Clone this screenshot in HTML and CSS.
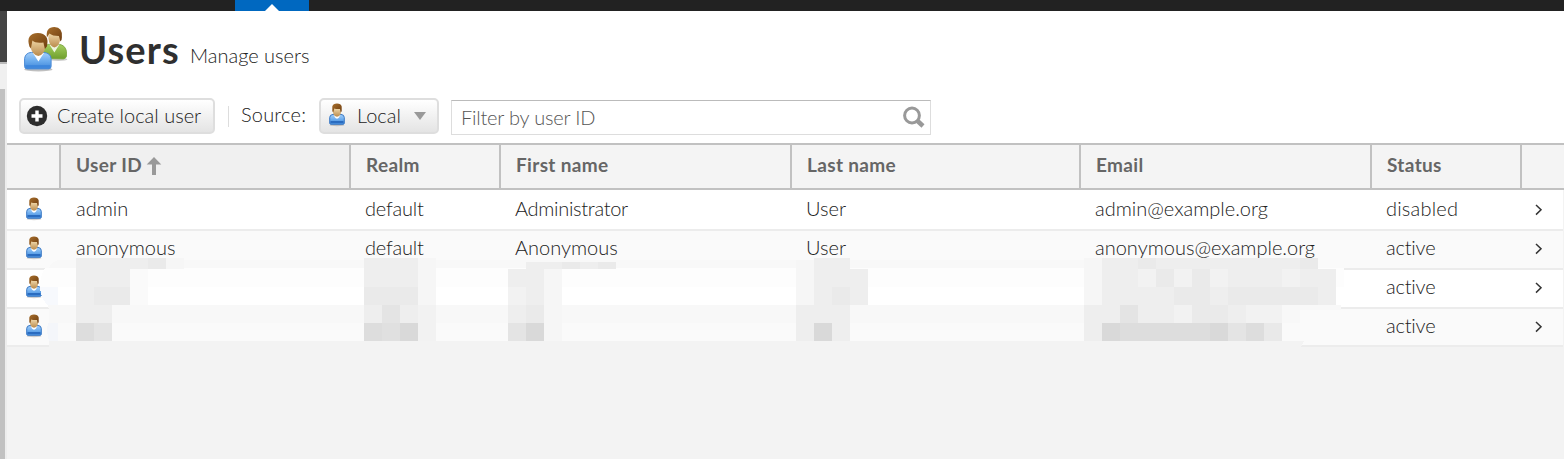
FILE: index.html
```html
<!DOCTYPE html>
<html lang="en">
<head>
<meta charset="utf-8">
<title>Users</title>
<link rel="stylesheet" href="styles.css">
</head>
<body>
<svg class="defs" width="0" height="0" aria-hidden="true">
  <defs>
    <linearGradient id="hair" x1="0" y1="0" x2="1" y2="1"><stop offset="0" stop-color="#a86f2c"/><stop offset="1" stop-color="#6e3d10"/></linearGradient>
    <linearGradient id="skin" x1="0" y1="0" x2="0" y2="1"><stop offset="0" stop-color="#f3dcae"/><stop offset="1" stop-color="#b98a4c"/></linearGradient>
    <linearGradient id="blue" x1="0" y1="0" x2="0" y2="1"><stop offset="0" stop-color="#a5d0fa"/><stop offset="0.55" stop-color="#68a9ec"/><stop offset="1" stop-color="#3f86d8"/></linearGradient>
    <linearGradient id="green" x1="0" y1="0" x2="0" y2="1"><stop offset="0" stop-color="#a5cf60"/><stop offset="1" stop-color="#6f9f2c"/></linearGradient>
    <symbol id="person" viewBox="0 0 18 24">
      <ellipse cx="9" cy="22" rx="7.5" ry="1.2" fill="#000" opacity=".18"/>
      <path d="M1.700 20V14.500Q1.700 11.700 5 11.400L13 11.400Q16.300 11.700 16.300 14.500V20Q16.300 21.300 15 21.300H3Q1.700 21.300 1.700 20Z" fill="url(#blue)" stroke="#3a78c4"/>
      <path d="M6 11.500H12Q11.500 15.500 9 15.700Q6.500 15.500 6 11.500Z" fill="#fff"/>
      <path d="M2.500 19H15.500" stroke="#2a6cc0" stroke-width="2"/>
      <path d="M5 5H13V9.500Q12.300 13.500 9 13.700Q5.700 13.500 5 9.500Z" fill="url(#skin)"/>
      <path d="M4.300 8.500V3.500Q5 .5 9 .5Q13 .5 13.700 3.500V8.500L12.600 9L12 6Q8 6.200 6.300 5.500L5.400 9Z" fill="url(#hair)"/>
    </symbol>
    <symbol id="chev" viewBox="0 0 8 12"><path d="M1 1L6 5.800L1 10.600" fill="none" stroke="#333" stroke-width="1.500"/></symbol>
  </defs>
</svg>
<div class="topbar"><div class="active-tab"></div></div>
<div class="shell">
  <div class="rail"><div class="rail-dark"></div><div class="rail-light"></div><div class="rail-track"></div></div>
  <main class="panel">
    <header class="title">
      <svg class="users-icon" width="48" height="50" viewBox="0.6 0.6 48 50">
        <ellipse cx="16" cy="45" rx="14" ry="2" fill="#000" opacity=".25"/>
        <ellipse cx="36" cy="35" rx="9" ry="1.500" fill="#000" opacity=".2"/>
        <path d="M20 34V26Q21 21 26 20L37 20Q43 21 44 27V32Q43.500 34 41 34.500Z" fill="url(#green)" stroke="#7fa843"/>
        <path d="M27 20H37L32 28Z" fill="#eef4e0"/>
        <path d="M26 8H38V14Q37 22 32 23Q27 22 26 14Z" fill="url(#skin)"/>
        <path d="M24.500 13Q23 2.500 32 2.500Q40.500 2.500 39.500 13Q39.500 16 38 17L36.500 11.500Q30 11.500 27 9Z" fill="url(#hair)"/>
        <path d="M2.200 42V34Q3 28.500 9 28L21 28Q28 28.500 28.700 34V42Q28.700 44.500 26 44.500H5Q2.200 44.500 2.200 42Z" fill="url(#blue)" stroke="#4a8ad6"/>
        <path d="M3.200 42H27.800" stroke="#3d86dc" stroke-width="2.500"/>
        <path d="M10.500 28.500H21.500L16 37Z" fill="#fff"/>
        <path d="M8 14H23V22Q22 30.500 16 31.500Q9.500 30.500 8 22Z" fill="url(#skin)"/>
        <path d="M7 22Q3 9 15.500 8.500Q27.500 9 24.500 22L22.500 24.500L21 18Q13 19 10 16L8.500 24Z" fill="url(#hair)"/>
      </svg>
      <h1>Users</h1><span class="subtitle">Manage users</span>
    </header>
    <div class="toolbar">
      <button class="btn create"><svg width="22" height="22" viewBox="0 0 22 22"><circle cx="11" cy="11" r="10.200" fill="#2d2d2d"/><path d="M11 5.500V16.500M5.500 11H16.500" stroke="#fff" stroke-width="3.400"/></svg><span>Create local user</span></button>
      <span class="divider"></span>
      <span class="source">Source:</span>
      <button class="btn local"><svg width="18" height="24"><use href="#person"/></svg><span>Local</span><i class="caret"></i></button>
      <div class="filter"><span>Filter by user ID</span><svg width="24" height="24" viewBox="0 0 24 24" fill="none" stroke="#999"><circle cx="10" cy="9.500" r="7.400" stroke-width="3"/><path d="M15 14.500L21 20" stroke-width="4.500"/></svg></div>
    </div>
    <div class="grid head">
      <div></div><div class="sorted">User ID<svg width="16" height="18" viewBox="0 0 16 18"><path d="M8 0L15.300 7.500H10V18H6V7.500H.7Z" fill="#999"/></svg></div><div>Realm</div><div>First name</div><div>Last name</div><div>Email</div><div>Status</div><div></div>
    </div>
    <div class="grid row first"><div><svg width="18" height="24"><use href="#person"/></svg></div><div>admin</div><div class="tight">default</div><div class="tighter">Administrator</div><div>User</div><div>admin@example.org</div><div class="loose">disabled</div><div><svg width="8" height="12"><use href="#chev"/></svg></div></div>
    <div class="grid row alt"><div><svg width="18" height="24"><use href="#person"/></svg></div><div>anonymous</div><div class="tight">default</div><div>Anonymous</div><div>User</div><div>anonymous@example.org</div><div class="tight">active</div><div><svg width="8" height="12"><use href="#chev"/></svg></div></div>
    <div class="grid row"><div><svg width="18" height="24"><use href="#person"/></svg></div><div></div><div></div><div></div><div></div><div></div><div class="tight">active</div><div><svg width="8" height="12"><use href="#chev"/></svg></div></div>
    <div class="grid row alt last"><div><svg width="18" height="24"><use href="#person"/></svg></div><div></div><div></div><div></div><div></div><div></div><div class="tight">active</div><div><svg width="8" height="12"><use href="#chev"/></svg></div></div>
  </main>
</div>
<svg class="redaction" width="1564" height="459" shape-rendering="crispEdges" aria-hidden="true">
  <path d="M58 260H1318V269H48Q53 261 58 260Z" fill="#f8f8f8"/>
  <path d="M45 268H1344V287H40Q40 275 45 268Z" fill="#fdfdfd"/>
  <path d="M40 287H1343V305H48Q41 300 40 287Z" fill="#fff"/>
  <path d="M40 287H58V305H48Q41 300 40 287Z" fill="#f7f9fd"/>
  <path d="M48 305H1341V310H49Z" fill="#f8f8f8"/>
  <path d="M49 310H1300V323H49Z" fill="#f8f8f8"/>
  <path d="M48 323H1300V341H49Q46 332 48 323Z" fill="#fafafa"/>
  <path d="M48 323H58V341H49Q46 332 48 323Z" fill="#f4f6fa"/>
  <path d="M49 341H1304L1301 347H49Z" fill="#f3f3f3"/>
  <g fill="#eee">
    <path d="M76 258H184V269H76ZM76 269H130V287H76ZM76 287H94V305H76ZM76 305H112V323H76Z"/>
    <path d="M364 258H418V287H364ZM364 305H382V323H364ZM400 305H418V323H400Z"/>
    <path d="M508 269H544V323H508ZM526 262H616V269H526Z"/>
    <path d="M814 258H850V341H814ZM796 305H814V341H796ZM832 269H868V305H832Z"/>
    <path d="M1102 258H1318V269H1336V305H1102ZM1084 305H1282V341H1084Z"/>
  </g>
  <g fill="#f6f6f6">
    <path d="M166 258H184V269H166ZM418 258H436V305H418ZM544 269H562V341H544ZM796 260H814V305H796ZM1084 258H1102V305H1084Z"/>
  </g>
  <path d="M130 269H148V305H130Z" fill="#fafafa"/>
  <path d="M418 305H436V341H418ZM508 287H526V305H508ZM1138 269H1156V287H1138ZM1174 269H1192V287H1174ZM1210 269H1228V287H1210ZM1282 269H1300V287H1282ZM1174 305H1192V323H1174ZM1246 305H1282V323H1246Z" fill="#f2f2f2"/>
  <path d="M94 287H130V305H94ZM148 258H166V269H148ZM364 287H418V305H364ZM526 305H544V323H526ZM562 262H580V269H562ZM598 262H616V269H598ZM832 287H850V305H832ZM1138 258H1156V269H1138ZM1156 269H1174V287H1156ZM1192 269H1210V287H1192ZM1174 287H1210V305H1174ZM1228 287H1318V305H1228ZM1300 258H1318V269H1300ZM1192 305H1228V323H1192Z" fill="#eaeaea"/>
  <path d="M382 305H400V323H382ZM508 323H526V341H508ZM94 323H112V341H94ZM1120 305H1138V323H1120ZM1228 323H1246V341H1228Z" fill="#e4e4e4"/>
  <path d="M1264 323H1282V341H1264Z" fill="#e9e9e9"/>
  <path d="M382 323H400V341H382Z" fill="#e0e0e0"/>
  <path d="M76 323H94V341H76ZM364 323H382V341H364ZM1102 323H1228V341H1102ZM1246 323H1264V341H1246Z" fill="#dddddd"/>
  <path d="M400 323H418V341H400ZM526 323H544V341H526ZM814 323H832V341H814ZM1102 323H1120V341H1102ZM1210 323H1228V341H1210Z" fill="#d9d9d9"/>
</svg>
</body>
</html>
```
FILE: styles.css
```css
* { box-sizing: border-box; }
body { margin: 0; height: 459px; overflow: hidden; background: #f3f3f3; color: #222; font: 300 20px/24px Lato, "Open Sans", sans-serif; font-variant-ligatures: none; }
.defs { position: absolute; }
.topbar { height: 11px; background: #222; padding-left: 235px; }
.active-tab { width: 74px; height: 11px; background: #0068c0; display: flex; justify-content: center; align-items: flex-end; }
.active-tab::after { content: ""; border: 7px solid transparent; border-top: 0; border-bottom-color: #fff; margin-right: 1px; }
.shell { display: flex; height: 448px; }
.rail { width: 7px; background: #f3f3f3; }
.rail-dark { height: 53px; background: #444; border-bottom: 2px solid #bbb; }
.rail-light { height: 25px; background: #f0f0f0; }
.rail-track { height: 370px; background: #c1c1c1; border-right: 2px solid #ededed; }
.panel { flex: 1; min-width: 0; }
.title { height: 79px; background: #fff; padding: 14px 0 0 16px; display: flex; align-items: flex-start; }
.users-icon { flex: none; }
h1 { margin: 4px 0 0 8px; width: 102px; font: 700 38px/40px Lato, sans-serif; letter-spacing: 1.1px; color: #2f2f2f; }
.subtitle { margin: 18px 0 0 9px; }
.toolbar { height: 53px; background: #fff; padding: 8px 0 0 12px; display: flex; align-items: flex-start; white-space: nowrap; }
.btn { height: 36px; border: 2px solid #dedede; border-radius: 5px; background: linear-gradient(#fff, #e4e4e4); display: flex; align-items: center; font: inherit; color: inherit; padding: 0; }
.btn span { position: relative; top: -1.5px; }
.create { width: 196px; padding-left: 5px; gap: 9px; }
.divider { width: 1px; height: 21px; background: #ddd; margin: 8px 0 0 13px; }
.source { width: 78px; margin: 4px 0 0 12px; letter-spacing: .2px; }
.local { width: 120px; padding-left: 7px; }
.local svg { margin-top: -3px; }
.local span { margin-left: 11px; width: 46px; text-align: left; }
.caret { border: 6px solid transparent; border-top: 8px solid #999; border-bottom: 0; margin-left: 11px; }
.filter { margin: 2px 0 0 12px; width: 480px; height: 35px; border: 1px solid #ddd; border-top-color: #bbb; padding: 0 4px 2px 9px; display: flex; align-items: center; justify-content: space-between; color: #555; letter-spacing: -.2px; }
.filter svg { margin-top: 2px; }
.grid { display: grid; grid-template-columns: 54px 290px 150px 291px 289px 291px 150px 42px; }
.head { height: 47px; border: solid #c1c1c1; border-width: 2px 0; font-weight: 700; font-size: 19px; letter-spacing: .35px; color: #666; background: #f4f4f4; }
.head > div { border-right: 2px solid #c1c1c1; padding: 8px 0 0 15px; }
.head > div:last-child { border-right: 0; }
.head .sorted { background: #f0f0f0; display: flex; gap: 4px; }
.sorted svg { margin-top: 4px; }
.row { height: 39px; border-bottom: 2px solid #ececec; background: #fff; margin-right: 1px; }
.alt { background: #fafafa; }
.row > div { padding: 4px 0 0 14px; }
.row > div:nth-child(2) { padding-left: 15px; }
.row > div:first-child { padding: 5px 0 0 18px; }
.row > div:last-child { padding: 12px 0 0 13px; }
.first { height: 41px; }
.first > div { padding-top: 6px; }
.first > div:first-child { padding-top: 7px; }
.first > div:last-child { padding-top: 14px; }
.last { height: 38px; }
.tight { letter-spacing: -.2px; }
.tighter { letter-spacing: -.3px; }
.loose { letter-spacing: .2px; }
.row svg { display: block; }
.redaction { position: absolute; left: 0; top: 0; pointer-events: none; }
```
